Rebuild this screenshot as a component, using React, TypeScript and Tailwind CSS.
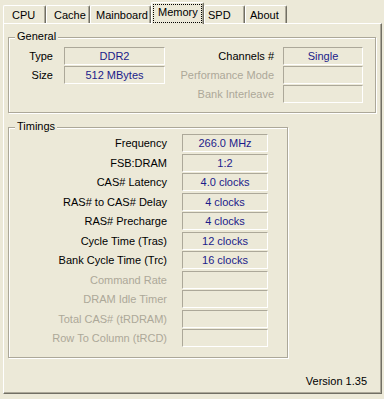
import React from "react";

type Tab = { name: string; cls: string; active?: boolean };

const tabs: Tab[] = [
  { name: "CPU", cls: "w-[43px] pl-[8px]" },
  { name: "Cache", cls: "w-[44px] pl-[7px]" },
  { name: "Mainboard", cls: "w-[61px] pl-[5px]" },
  { name: "Memory", cls: "w-[53px]", active: true },
  { name: "SPD", cls: "w-[41px] pl-[3px]" },
  { name: "About", cls: "w-[42px] pl-[4px]" },
];

const timings = [
  { label: "Frequency", value: "266.0 MHz" },
  { label: "FSB:DRAM", value: "1:2" },
  { label: "CAS# Latency", value: "4.0 clocks" },
  { label: "RAS# to CAS# Delay", value: "4 clocks" },
  { label: "RAS# Precharge", value: "4 clocks" },
  { label: "Cycle Time (Tras)", value: "12 clocks" },
  { label: "Bank Cycle Time (Trc)", value: "16 clocks" },
  { label: "Command Rate", value: "", off: true },
  { label: "DRAM Idle Timer", value: "", off: true },
  { label: "Total CAS# (tRDRAM)", value: "", off: true },
  { label: "Row To Column (tRCD)", value: "", off: true },
];

function Box({ value, className }: { value?: string; className: string }) {
  return (
    <div
      className={`flex items-center justify-center h-[18px] pt-[1px] border border-t-[#aca899] border-l-[#aca899] border-b-white border-r-white text-[#1b1b8a] ${className}`}
    >
      {value}
    </div>
  );
}

function Label({ text, off, className }: { text: string; off?: boolean; className: string }) {
  return (
    <div
      className={`flex items-center justify-end h-[18px] whitespace-nowrap ${
        off ? "text-[#aca899]" : "text-black"
      } ${className}`}
    >
      {text}
    </div>
  );
}

function GroupBox({
  title,
  className,
  children,
}: {
  title: string;
  className: string;
  children: React.ReactNode;
}) {
  return (
    <div
      className={`relative border border-[#aca899] shadow-[inset_1px_1px_0_#fff,1px_1px_0_#fff] ${className}`}
    >
      <span className="absolute -top-[8px] left-[6px] px-[2px] bg-[#ece9d8] leading-[13px]">
        {title}
      </span>
      {children}
    </div>
  );
}

export default function App() {
  return (
    <div className="w-[384px] h-[399px] bg-[#ece9d8] text-[11px] leading-[13px] text-black font-['Liberation_Sans',Arial,sans-serif] overflow-hidden">
      {/* tab strip */}
      <div className="flex items-end h-[23px] pl-[3px]">
        {tabs.map((t) =>
          t.active ? (
            <div
              key={t.name}
              className={`relative z-10 -mb-[1px] h-[22px] pl-[1px] pt-[1px] bg-[#ece9d8] border-l border-t border-white border-r border-r-[#716f64] rounded-t-[2px] shadow-[inset_-1px_0_0_#aca899] ${t.cls}`}
            >
              <div className="w-[49px] h-[19px] pl-[4px] pt-[1px] border border-dotted border-black">
                {t.name}
              </div>
            </div>
          ) : (
            <div
              key={t.name}
              className={`h-[18px] pt-[3px] border-l border-t border-white border-r border-r-[#716f64] rounded-t-[2px] shadow-[inset_-1px_0_0_#aca899] ${t.cls}`}
            >
              {t.name}
            </div>
          )
        )}
      </div>

      {/* tab panel */}
      <div className="flex flex-col ml-[3px] w-[379px] h-[371px] pl-[4px] pt-[13px] border-l border-t border-white border-r border-b border-r-[#716f64] border-b-[#716f64] shadow-[inset_-1px_-1px_0_#aca899]">
        <GroupBox title="General" className="w-[368px] h-[76px] pt-[9px]">
          <div className="flex flex-col gap-[1px]">
            <div className="flex">
              <Label text="Type" className="w-[44px]" />
              <Box value="DDR2" className="w-[101px] ml-[11px]" />
              <Label text="Channels #" className="w-[109px]" />
              <Box value="Single" className="w-[80px] ml-[9px]" />
            </div>
            <div className="flex">
              <Label text="Size" className="w-[44px]" />
              <Box value="512 MBytes" className="w-[101px] ml-[11px]" />
              <Label text="Performance Mode" off className="w-[109px]" />
              <Box className="w-[80px] ml-[9px]" />
            </div>
            <div className="flex">
              <div className="w-[156px]" />
              <Label text="Bank Interleave" off className="w-[109px]" />
              <Box className="w-[80px] ml-[9px]" />
            </div>
          </div>
        </GroupBox>

        <GroupBox title="Timings" className="mt-[14px] w-[280px] h-[231px] pt-[6px]">
          <div className="flex flex-col">
            {timings.map((r, i) => (
              <div
                key={r.label}
                className={`flex ${i === 0 ? "" : i % 2 === 1 ? "mt-[2px]" : "mt-[1px]"}`}
              >
                <Label text={r.label} off={r.off} className="w-[158px]" />
                <Box value={r.value} className="w-[86px] ml-[15px]" />
              </div>
            ))}
          </div>
        </GroupBox>

        <div className="mt-auto self-end pr-[14px] pb-[5px]">Version 1.35</div>
      </div>
    </div>
  );
}
